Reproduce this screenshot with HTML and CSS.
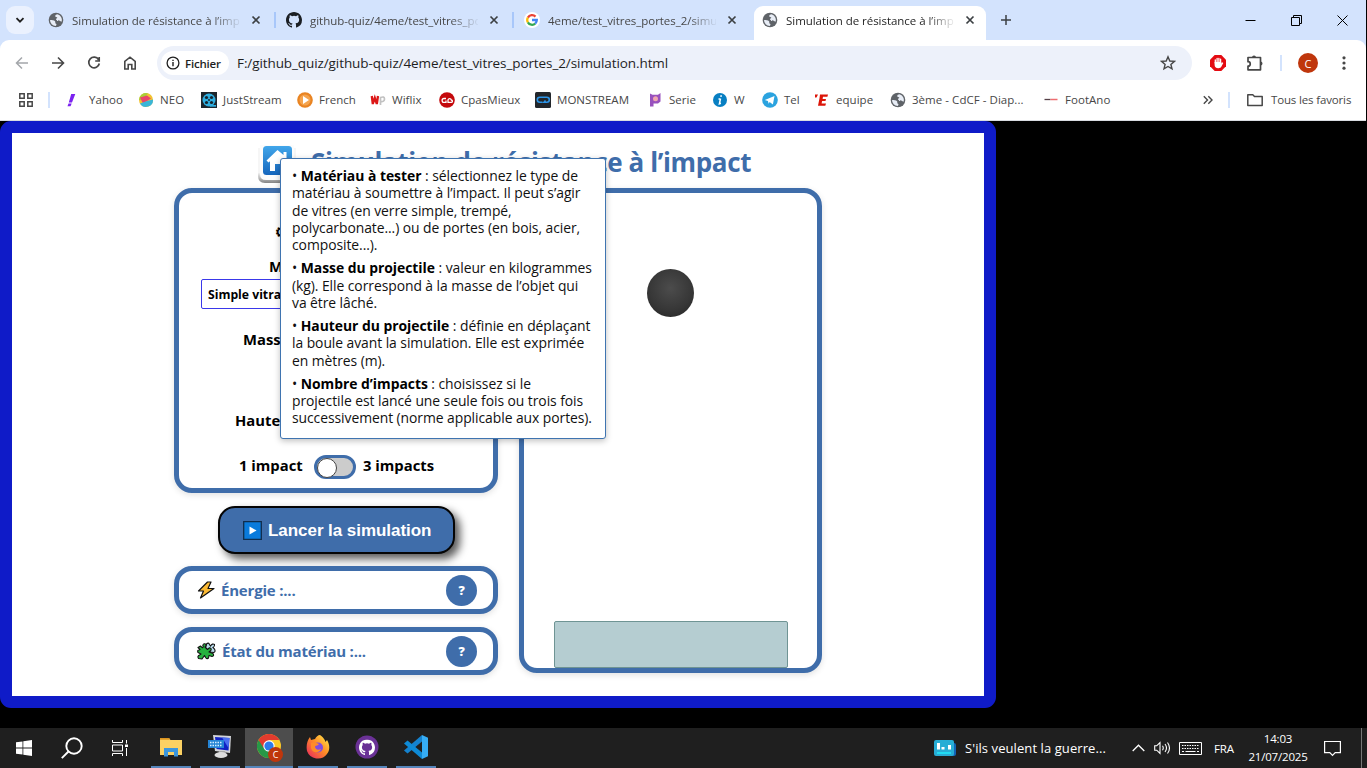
FILE: index.html
```html
<!DOCTYPE html>
<html lang="fr">
<head>
<meta charset="utf-8">
<title>Simulation de résistance à l’impact</title>
<link rel="stylesheet" href="styles.css">
</head>
<body>
<svg class="defs" aria-hidden="true">
  <symbol id="globe" viewBox="0 0 16 16"><circle cx="8" cy="8" r="7.300" fill="#5f6368"/><path d="M2 8c2 0 4 0 5 1.200s-.6 2 1 2.600c1 .4.2 1.800-.2 2.200A6 6 0 0 1 2 8zM9.500 2.300c-1 .2-2.500.7-2.300 1.900.2 1 1.600.6 2 1.400.4.9-1.900 1.100-1 2.200.8 1 2.800.2 3.600 1 .6.6 1 .8 2 .6A6 6 0 0 0 9.500 2.300z" fill="#e8edf6"/></symbol>
  <symbol id="cross" viewBox="0 0 10 10"><path d="M1.500 1.500l7 7M8.500 1.500l-7 7" stroke="#3c4043" stroke-width="1.700"/></symbol>
  <symbol id="cat" viewBox="0 0 16 16"><path fill="currentColor" d="M8 0C3.580 0 0 3.580 0 8c0 3.540 2.290 6.530 5.470 7.590.4.07.55-.17.55-.38v-1.490c-2.220.48-2.690-.95-2.690-.95-.36-.92-.89-1.170-.89-1.170-.73-.5.05-.49.05-.49.81.06 1.230.83 1.230.83.72 1.230 1.880.87 2.340.67.07-.52.28-.87.51-1.070-1.780-.2-3.640-.89-3.640-3.950 0-.87.31-1.590.82-2.150-.08-.2-.36-1.020.08-2.120 0 0 .67-.21 2.200.82a7.600 7.600 0 0 1 4 0c1.530-1.040 2.200-.82 2.200-.82.44 1.100.16 1.920.08 2.120.51.56.82 1.270.82 2.150 0 3.070-1.870 3.750-3.650 3.950.29.25.54.73.54 1.480v2.200c0 .21.150.46.55.38A8 8 0 0 0 16 8c0-4.420-3.580-8-8-8z"/></symbol>
</svg>

<header class="browser">
  <div class="tabstrip">
    <button class="tabsearch"><svg width="10" height="10" viewBox="0 0 10 10"><path d="M1.500 3.200L5 6.700l3.500-3.500" fill="none" stroke="#1f1f1f" stroke-width="1.800"/></svg></button>
    <div class="tab"><svg class="fav"><use href="#globe"/></svg><span class="tabtitle">Simulation de résistance à l’imp</span><svg class="x"><use href="#cross"/></svg></div>
    <div class="tab"><svg class="fav black"><use href="#cat"/></svg><span class="tabtitle">github-quiz/4eme/test_vitres_po</span><svg class="x"><use href="#cross"/></svg></div>
    <div class="tab nosep"><span class="fav gwrap"><svg width="12" height="12" viewBox="0 0 12 12" fill="none" stroke-width="2.300"><path d="M9.500 2.600A4.800 4.800 0 0 0 1.900 3.600" stroke="#ea4335"/><path d="M1.900 3.600a4.800 4.800 0 0 0 0 4.800" stroke="#fbbc05"/><path d="M1.900 8.400a4.800 4.800 0 0 0 7.300 1.200" stroke="#34a853"/><path d="M9.200 9.600A4.800 4.800 0 0 0 10.800 6H6" stroke="#4285f4"/></svg></span><span class="tabtitle">4eme/test_vitres_portes_2/simu</span><svg class="x"><use href="#cross"/></svg></div>
    <div class="tab active"><svg class="fav"><use href="#globe"/></svg><span class="tabtitle">Simulation de résistance à l’imp</span><svg class="x"><use href="#cross"/></svg></div>
    <button class="newtab"><svg width="12" height="12" viewBox="0 0 12 12"><path d="M6 1v10M1 6h10" stroke="#3c4043" stroke-width="1.500"/></svg></button>
    <div class="winctl">
      <svg width="11" height="11" viewBox="0 0 11 11"><path d="M.5 5.500h10" stroke="#000"/></svg>
      <svg width="11" height="11" viewBox="0 0 11 11"><path d="M.5 2.500h8v8h-8zM2.500 2.500v-2h8v8h-2" fill="none" stroke="#000"/></svg>
      <svg width="11" height="11" viewBox="0 0 11 11"><path d="M.5.5l10 10M10.500.5l-10 10" stroke="#000"/></svg>
    </div>
  </div>

  <div class="toolbar">
    <div class="nav">
      <svg viewBox="0 0 16 16" fill="none" stroke="#a4a7ab" stroke-width="1.500"><path d="M14 8H3M8 2.500L2.500 8 8 13.500"/></svg>
      <svg viewBox="0 0 16 16" fill="none" stroke="#474747" stroke-width="1.600"><path d="M2 8h11M8 2.500L13.500 8 8 13.500"/></svg>
      <svg viewBox="0 0 16 16" fill="none" stroke="#474747" stroke-width="1.700"><path d="M12.600 4.700A5.300 5.300 0 1 0 13.300 8.500M13.200 2v4H9.200"/></svg>
      <svg viewBox="0 0 16 16" fill="none" stroke="#474747" stroke-width="1.600"><path d="M2.800 14V6.500L8 2.200l5.200 4.300V14H9.800V9.500H6.200V14z"/></svg>
    </div>
    <div class="omnibox">
      <span class="chip"><svg width="14" height="14" viewBox="0 0 14 14"><circle cx="7" cy="7" r="5.900" fill="none" stroke="#1f1f1f" stroke-width="1.300"/><path d="M7 6v4.200M7 3.700v1.400" stroke="#1f1f1f" stroke-width="1.400"/></svg>Fichier</span>
      <span class="url">F:/github_quiz/github-quiz/4eme/test_vitres_portes_2/simulation.html</span>
      <svg class="star" width="16" height="16" viewBox="0 0 16 16"><path d="M8 1.800l1.800 4.200 4.600.4-3.500 3 1.100 4.500L8 11.500l-4 2.400 1.100-4.500-3.500-3 4.600-.4z" fill="none" stroke="#474747" stroke-width="1.400"/></svg>
    </div>
    <div class="ext">
      <svg width="18" height="18" viewBox="0 0 18 18"><path d="M5.700 1h6.600L17 5.700v6.600L12.300 17H5.700L1 12.300V5.700z" fill="#e40b12"/><path d="M6.300 9V5.800M8.100 9V4.300M9.900 9V4.300M11.600 9V5.200" stroke="#fff" stroke-width="1.300" stroke-linecap="round"/><path d="M5.600 8h6.700v1.500l1.200-1.200.8.600-2 3.900c-.6 1-1.400 1.400-3 1.400-2.500 0-3.700-1.400-3.700-3.400z" fill="#fff"/></svg>
      <svg width="18" height="18" viewBox="0 0 18 18"><path d="M2 3.500h12.500v12.300H2v-3.600c3 0 3-4.500 0-4.500z" fill="none" stroke="#474747" stroke-width="1.700" stroke-linejoin="round"/><path d="M6 3.500a2 2 0 0 1 4 0zM14.500 7.500a2 2 0 0 1 0 4z" fill="#474747"/></svg>
      <i class="bar"></i>
      <b class="avatar">C</b>
      <svg width="4" height="16" viewBox="0 0 4 16" fill="#474747"><circle cx="2" cy="2.800" r="1.600"/><circle cx="2" cy="8" r="1.600"/><circle cx="2" cy="13.200" r="1.600"/></svg>
    </div>
  </div>

  <div class="bookmarks">
    <svg class="apps" width="14" height="14" viewBox="0 0 14 14" fill="none" stroke="#474747" stroke-width="1.500"><path d="M.8.8h4.400v4.400H.8zM8.800.8h4.400v4.400H8.800zM.8 8.800h4.400v4.400H.8zM8.800 8.800h4.400v4.400H8.800z"/></svg>
    <i class="bar"></i>
    <div class="marks">
      <span class="yahoo"><svg viewBox="0 0 16 16" fill="#7b22f0"><path d="M6.200 2h4.100L7 10.500H3.800zM3.500 11.500h3.200L5.500 14.200H2.500z"/></svg>Yahoo</span>
      <span><svg viewBox="0 0 16 16"><circle cx="8" cy="8" r="7" fill="#f2c230"/><path d="M1 8a7 7 0 0 1 9-6.700L5 8z" fill="#a8cf38"/><path d="M2 5.500l7-2 4 3-8 5z" fill="#e8456b"/><path d="M2 11.500L9 9l6-1.500A7 7 0 0 1 2 11.500z" fill="#39b6d8"/></svg>NEO</span>
      <span><svg viewBox="0 0 16 16"><path d="M0 0h16v16H0z" fill="#1d252c"/><circle cx="8" cy="8" r="6.500" fill="#2eaee0"/><path d="M9 13h6v1.700H9z" fill="#2eaee0"/><g fill="#16222c"><circle cx="5.500" cy="5.500" r="1.600"/><circle cx="10.500" cy="5.500" r="1.600"/><circle cx="5.500" cy="10.500" r="1.600"/><circle cx="10.500" cy="10.500" r="1.600"/><circle cx="8" cy="8" r="1"/></g></svg>JustStream</span>
      <span><svg viewBox="0 0 16 16"><circle cx="8" cy="8" r="7.800" fill="#e98422"/><circle cx="8" cy="8" r="5.500" fill="#f5a44e"/><path d="M6 4l6 4-6 4z" fill="#fff"/></svg>French</span>
      <span><svg viewBox="0 0 16 16" fill="none"><path d="M1.800 4l1 8 2-6 2 6 1.200-8" stroke="#dc1717" stroke-width="2.300"/><path d="M10.500 13V5.500q4-1.500 4 1.500t-4 2.500" stroke="#c2c2c2" stroke-width="1.700"/></svg>Wiflix</span>
      <span><svg viewBox="0 0 16 16"><circle cx="8" cy="8" r="7.800" fill="#c4090c"/><path d="M7 6.500H5a1.900 1.900 0 0 0 0 3.800h2V8.500M9 10.300V8A1.700 1.700 0 0 1 12.300 8c1.800.5 1.200 2.300 0 2.300z" stroke="#fff" stroke-width="1.300" fill="none"/></svg>CpasMieux</span>
      <span><svg viewBox="0 0 16 16"><rect width="16" height="16" rx="1.500" fill="#22262b"/><path d="M7.500 10.200H4.800a2.200 2.200 0 0 1 0-5h7a2.200 2.200 0 0 1 0 5H9l1.500-1.700" fill="none" stroke="#2d95e8" stroke-width="1.600"/></svg>MONSTREAM</span>
      <span><svg viewBox="0 0 16 16"><path d="M3 1.500l2.500 1.300h5.500L13.500 1v8.500L11 11.500H6.500v3H3z" fill="#9851bd"/><circle cx="8.500" cy="6.800" r="2.500" fill="#efa7b0"/></svg>Serie</span>
      <span><svg viewBox="0 0 16 16"><circle cx="8" cy="8" r="7" fill="#087fc2"/><path d="M9.300 3.300l-.4 1.600M8.500 6.500L7.400 11.800l1.500-.5M6.500 7h2" fill="none" stroke="#fff" stroke-width="1.500"/></svg>W</span>
      <span><svg viewBox="0 0 16 16"><circle cx="8" cy="8" r="7.800" fill="#2ba3df"/><path d="M2.800 8l9.700-4-1.600 8.600L7.600 10l-.9 1.800-.8-2.700z" fill="#fff"/></svg>Tel</span>
      <span><svg viewBox="0 0 16 16"><path d="M1 2.500h3L2.500 5.500H1zM6 2.500h8l-.6 2.300H9L8.600 7H12l-.5 2H8.100l-.5 2.500H12L11.300 13.700H4l1.500-7.500z" fill="#dc1508"/></svg>equipe</span>
      <span><svg viewBox="0 0 16 16"><use href="#globe"/></svg>3ème - CdCF - Diap...</span>
      <span><svg viewBox="0 0 16 16"><path d="M1.500 7.500h6" stroke="#564048" stroke-width="1.300"/><path d="M7.500 7.500h7" stroke="#ee6d70" stroke-width="1.500"/></svg>FootAno</span>
    </div>
    <svg class="more" width="10" height="10" viewBox="0 0 10 10" fill="none" stroke="#474747" stroke-width="1.400"><path d="M.8 1.200L4.500 5 .8 8.800M5.300 1.200L9 5 5.300 8.800"/></svg>
    <i class="bar"></i>
    <span class="all"><svg width="16" height="14" viewBox="0 0 16 14"><path d="M.8 11.700V1.800h5l1.700 1.700h7.700v9H.8z" fill="none" stroke="#474747" stroke-width="1.500" stroke-linejoin="round"/></svg>Tous les favoris</span>
  </div>
</header>

<main class="viewport">
  <section class="frame">
    <div class="heading">
      <svg class="home" width="40" height="40" viewBox="0 0 40 40">
        <defs><linearGradient id="hb" x2="0" y2="1"><stop offset="0" stop-color="#41a6ea"/><stop offset="1" stop-color="#1566bd"/></linearGradient><linearGradient id="hs" x2="0" y2="1"><stop offset=".7" stop-color="#f6f6f6"/><stop offset="1" stop-color="#858585"/></linearGradient></defs>
        <path d="M1 3v28q0 7 7 7h24q7 0 7-7V3z" fill="url(#hs)"/><path d="M3 0h34v29q0 6-6 6H9q-6 0-6-6z" fill="#fcfcfc"/>
        <rect x="6" y="1" width="29" height="29" rx="3.500" fill="url(#hb)"/><path d="M20.500 5L9.500 15.500l2 2 1.500-1.200V26h5v-7h6v7h5v-9.700l1.500 1.200 2-2-3-2.700V7h-3v3z" fill="#fff"/>
      </svg>
      <h1>Simulation de résistance à l’impact</h1>
    </div>
    <div class="columns">
      <div class="left">
        <div class="panel params">
          <p class="ptitle">⚙ Paramètres</p>
          <p class="lmat">Matériau à tester</p>
          <div class="select">Simple vitrage</div>
          <p class="lmass">Masse du projectile</p>
          <p class="lheight">Hauteur du projectile</p>
          <div class="impacts"><span class="one">1 impact</span><span class="toggle"></span><span>3 impacts</span></div>
        </div>
        <button class="launch"><svg width="19" height="19" viewBox="0 0 19 19"><path d="M.7.7h17.600v17.600H.7z" fill="#0a7bdc" stroke="#102d4c" stroke-width="1.300"/><path d="M6.500 5.500l7 4-7 4z" fill="#fff"/></svg>Lancer la simulation</button>
        <div class="panel result"><svg width="18" height="18" viewBox="0 0 18 18"><path d="M10.500 1L1.500 10h5l-3 7L17 7.500h-6l3-6.500z" fill="#fbb933" stroke="#111" stroke-width="1.200" stroke-linejoin="round"/></svg><span>Énergie :...</span><b class="help">?</b></div>
        <div class="panel result"><svg width="19" height="18" viewBox="0 0 19 18"><path d="M8.500 6l1-4q2-2 3 .5l1 1.500q2-3 4-1.500.5 2-1.500 3l1.500 1.500q1.500 3-1 3.500l-3-.5z" fill="#b9dced" stroke="#111" stroke-width="1.100"/><path d="M1 5.500l2.500-1.500 2 1.800q1.200-.8.300-2.300.5-2.500 2.700-1.500 1.200 1.500-.5 3l2.500 2.500 2-1.800q2.500.5 1.300 2.800l-1.800 1.500 4 1.500q1.500 2.500-1 3l-3-1-.5 2.500q-1.500 1.500-3-.5l-1-2-2.500 3.500-3.500-.5q-1.500-2.500 1-3.500l1.500-1-3-1.500q-1-2.500 1-2.500l1-.5z" fill="#27b13f" stroke="#111" stroke-width="1.100" stroke-linejoin="round"/></svg><span>État du matériau :...</span><b class="help">?</b></div>
      </div>
      <div class="panel scene"><div class="ball"></div><div class="glass"></div></div>
    </div>
    <div class="tooltip">
      <p>• <b>Matériau à tester</b> : sélectionnez le type de<br>matériau à soumettre à l’impact. Il peut s’agir<br>de vitres (en verre simple, trempé,<br>polycarbonate...) ou de portes (en bois, acier,<br>composite...).</p>
      <p>• <b>Masse du projectile</b> : valeur en kilogrammes<br>(kg). Elle correspond à la masse de l’objet qui<br>va être lâché.</p>
      <p>• <b>Hauteur du projectile</b> : définie en déplaçant<br>la boule avant la simulation. Elle est exprimée<br>en mètres (m).</p>
      <p>• <b>Nombre d’impacts</b> : choisissez si le<br>projectile est lancé une seule fois ou trois fois<br>successivement (norme applicable aux portes).</p>
    </div>
  </section>
</main>

<footer class="taskbar">
  <div class="apps-row">
    <div class="sys"><svg width="16" height="16" viewBox="0 0 16 16" fill="#fff"><path d="M0 2.300L6.500 1.400v6.200H0zM7.300 1.300L16 0v7.600H7.300zM0 8.400h6.500v6.200L0 13.700zM7.300 8.400H16V16l-8.700-1.300z"/></svg></div>
    <div class="sys"><svg width="22" height="22" viewBox="0 0 22 22" fill="none" stroke="#fff" stroke-width="1.900"><circle cx="13" cy="9" r="7.700"/><path d="M7.500 14.500L.8 21.200"/></svg></div>
    <div class="sys"><svg width="16" height="16" viewBox="0 0 16 16" fill="none" stroke="#fff"><path d="M.5 0v2.500h10V0M.5 5h10v6H.5zM.5 16v-2.500h10V16M14.500 0v3.500M14.500 8v8"/><path d="M13 4.500h3v2.500h-3z" fill="#fff" stroke="none"/></svg></div>
    <div class="app"><svg width="22" height="20" viewBox="0 0 22 20"><path d="M0 1h9l1.500 2H22v15H0z" fill="#fbd163"/><path d="M0 1h9l1 1.700H0z" fill="#db9420"/><path d="M4 11h14v8.500h-4V15H8v4.500H4z" fill="#3b96dd"/></svg></div>
    <div class="app"><svg width="24" height="24" viewBox="0 0 24 24"><path d="M5 0l18 1-1 17-15-2z" fill="#d3d5d9"/><path d="M7 2l14.500 1-1 12.500-12-1.500z" fill="#0f22c4"/><path d="M14 2.500l7.500.5-1 10z" fill="#4b6ff0"/><path d="M0 5h16v8H0z" fill="#2484d5"/><path d="M2 7.500h12M2 10.500h12" stroke="#d7eeff" stroke-width="1.500" stroke-dasharray="1.500 1"/><path d="M11 16h6l1 2h-7z" fill="#aaa"/><ellipse cx="13" cy="20" rx="6.500" ry="3" fill="#dedede"/></svg></div>
    <div class="app current"><svg width="26" height="26" viewBox="0 0 26 26"><circle cx="12" cy="12" r="12" fill="#fbc928"/><path d="M1.600 6A12 12 0 0 0 12 24l5-9-5-3z" fill="#279847"/><path d="M12 6h10.400A12 12 0 0 0 1.600 6l5 8z" fill="#e33b2e"/><circle cx="12" cy="12" r="5.700" fill="#fff"/><circle cx="12" cy="12" r="4.600" fill="#2d7bea"/></svg><b class="cbadge">C</b></div>
    <div class="app"><svg width="24" height="24" viewBox="0 0 24 24"><defs><linearGradient id="ff" x1="1" x2="0" y2="1"><stop offset="0" stop-color="#fff34f"/><stop offset=".45" stop-color="#ff8e26"/><stop offset="1" stop-color="#e81f62"/></linearGradient></defs><path d="M14 0c4 3 5 5 5.500 7l1.500-2c3 5 3 10 0 14A11.500 11.500 0 0 1 1 16C0 11 1 6 4 2l1 3 4-1c1-2 3-4 5-4z" fill="url(#ff)"/><circle cx="12" cy="12.500" r="5" fill="#804ce0"/><path d="M5 8c3-1 6 0 8 1-1 2-3 1-4 2.500 0 3 3 4 6 2.500-2 5-9 4-10-1z" fill="#ff8b28"/></svg></div>
    <div class="app"><svg width="24" height="24" viewBox="0 0 24 24"><circle cx="12" cy="12" r="11.500" fill="#6a3196"/><svg x="4" y="4.500" width="16" height="16" color="#fff"><use href="#cat"/></svg></svg></div>
    <div class="app"><svg width="24" height="24" viewBox="0 0 24 24"><path d="M18 0v6.500L3.500 18.500 0 15.500z" fill="#1482cf"/><path d="M18 24v-6.500L3.500 5.500 0 8.500z" fill="#0e8ad6"/><path d="M18 0l6 2.800v18.400L18 24z" fill="#36adf5"/></svg></div>
  </div>
  <div class="tray">
    <svg width="22" height="17" viewBox="0 0 22 17"><rect x="3" y="3" width="19" height="13" rx="2" fill="#1263b5"/><rect width="20" height="16" rx="2" fill="#28add5"/><path d="M4.500 3v6.500M9 7v2.500M15.500 5v4.500" stroke="#fff" stroke-width="3"/><path d="M3 13h14" stroke="#21e1f5" stroke-width="1.800"/></svg>
    <span class="news">S'ils veulent la guerre...</span>
    <svg width="13" height="8" viewBox="0 0 13 8"><path d="M.7 7L6.500 1.200 12.300 7" fill="none" stroke="#fff" stroke-width="1.300"/></svg>
    <svg width="17" height="14" viewBox="0 0 17 14" fill="none" stroke="#fff" stroke-width="1.100"><path d="M.7 4.800h2L6 1.500v11L2.700 9.200h-2zM8.500 4.700q1.500 2.300 0 4.600M11 3q3 4 0 8M13.500 1.500q4 5.500 0 11"/></svg>
    <svg width="23" height="13" viewBox="0 0 23 13" fill="none" stroke="#fff"><path d="M.5.5h22v12H.5z"/><path d="M3 3.500h17M3 6.500h17" stroke-dasharray="1.500 1"/><path d="M3 9.500h2M6.500 9.500h10M18 9.500h2"/></svg>
    <span class="lang">FRA</span>
    <span class="clock">14:03<br>21/07/2025</span>
    <svg width="17" height="17" viewBox="0 0 17 17"><path d="M.6 1.500h15.800v11.200h-5.200L8.500 15.500l-2.700-2.800H.6z" fill="none" stroke="#fff" stroke-width="1.200"/></svg>
  </div>
</footer>
</body>
</html>
```
FILE: styles.css
```css
* { box-sizing: border-box; }
body {
  margin: 0; width: 1367px; height: 768px; overflow: hidden; background: #000;
  font-family: "Open Sans", "Noto Sans", sans-serif;
  display: flex; flex-direction: column;
}
p, h1 { margin: 0; }
button { border: 0; padding: 0; font: inherit; }
svg { display: block; flex: none; }
.defs { position: absolute; width: 0; height: 0; }

/* Browser chrome */
.browser { width: 1366px; height: 121px; background: #d3e3fd; flex: none; color: #474747; font-size: 11.5px; }
.tabstrip { height: 40px; display: flex; align-items: center; padding-left: 6px; }
.tabsearch { width: 28px; height: 28px; border-radius: 9px; background: #eaf1fe; display: grid; place-items: center; margin-right: 6px; }
.tab { width: 238px; height: 34px; margin-top: 6px; padding: 0 0 6px 8px; display: flex; align-items: center; position: relative; }
.tab::after { content: ""; position: absolute; right: 2px; top: 6px; width: 2px; height: 16px; background: #a8c7fa; }
.tab.nosep::after, .tab.active::after { display: none; }
.fav { width: 16px; height: 16px; margin-right: 8px; }
.fav.black { color: #1b1f24; }
.gwrap { background: #fff; border-radius: 50%; display: grid; place-items: center; flex: none; }
.tabtitle { width: 168px; white-space: nowrap; line-height: 18px; padding-top: 1px; letter-spacing: -.04px; -webkit-mask-image: linear-gradient(90deg, #000 140px, transparent 170px); mask-image: linear-gradient(90deg, #000 140px, transparent 170px); }
.x { width: 10px; height: 10px; margin-left: 11px; }
.tab.active { width: 232px; background: #fff; border-radius: 9px 9px 0 0; color: #1f1f1f; }
.newtab { width: 28px; height: 28px; margin-left: 6px; background: none; display: grid; place-items: center; }
.winctl { margin-left: auto; display: flex; gap: 35px; padding-right: 18px; }
.toolbar { height: 46px; background: #fff; border-radius: 9px 9px 0 0; display: flex; align-items: center; }
.nav { display: flex; gap: 20px; width: 157px; padding-left: 14px; }
.nav svg { width: 16px; height: 16px; }
.omnibox { width: 1035px; height: 34px; background: #edf1fa; border-radius: 17px; display: flex; align-items: center; padding: 0 16px 0 4px; color: #1f1f1f; }
.chip { width: 68px; height: 24px; border-radius: 12px; background: #fff; display: flex; align-items: center; gap: 5px; padding-left: 5px; font-weight: 600; letter-spacing: -.2px; }
.url { margin-left: 8px; font-size: 13.5px; letter-spacing: -.09px; white-space: nowrap; }
.star { margin-left: auto; }
.ext { display: flex; align-items: center; padding-left: 17px; }
.ext svg:nth-child(2) { margin-left: 19px; }
.bar { width: 2px; height: 16px; background: #d3e3fd; flex: none; }
.ext .bar { margin: 0 16px; }
.avatar { width: 20px; height: 20px; border-radius: 50%; background: #bf360c; color: #fff; display: grid; place-items: center; font-size: 11px; font-weight: 400; margin-right: 24px; }
.bookmarks { height: 35px; background: #fff; border-bottom: 1px solid #d9dce1; display: flex; align-items: center; padding: 0 14px 7px 19px; white-space: nowrap; }
.bookmarks > .bar { margin-left: 15px; }
.marks { display: grid; grid-template-columns: 73px 63px 96px 73px 69px 96px 112px 65px 50px 52px 76px 153px 160px; margin-left: 15px; }
.marks span { display: flex; align-items: center; gap: 6px; letter-spacing: .04px; line-height: 18px; }
.marks span.yahoo { gap: 8px; }
.marks svg { width: 16px; height: 16px; }
.all { display: flex; align-items: center; gap: 8px; margin-left: 17px; letter-spacing: -.15px; }

/* Page */
.viewport { height: 607px; flex: none; }
.frame { position: relative; width: 996px; height: 587px; background: #fff; border: 12px solid #0f1bc8; border-radius: 11px; }
.heading { display: flex; height: 55px; padding: 12px 0 0 245px; }
h1 { font-size: 26px; line-height: 35px; font-weight: 700; color: #3f6daa; white-space: nowrap; margin-left: 14px; letter-spacing: -.37px; }
.columns { display: flex; gap: 21px; padding-left: 162px; }
.left { width: 324px; display: flex; flex-direction: column; }
.panel { border: 5px solid #3f6daa; border-radius: 18px; background: #fff; box-shadow: 0 2px 6px rgba(0,0,0,.12); }
.params { height: 305px; padding: 29px 0 0; font-size: 14.800px; font-weight: 700; line-height: 20px; white-space: nowrap; letter-spacing: 0; color: #000; }
.ptitle { padding-left: 96px; font-size: 14px; }
.lmat { padding-left: 90px; margin-top: 14px; }
.select { width: 270px; height: 30px; margin: 3px 0 0 22px; border: 1px solid #3a38ea; border-radius: 2px; padding-left: 6px; line-height: 29px; font-size: 12.200px; letter-spacing: 0; }
.lmass { padding-left: 64px; margin-top: 20px; }
.lheight { padding-left: 56px; margin-top: 61px; }
.impacts { display: flex; padding-left: 60px; margin-top: 25px; align-items: flex-start; }
.impacts .one { width: 75px; }
.toggle { width: 42px; height: 24px; border: 3px solid #3f6daa; border-radius: 12px; background: #ccc; margin: 0 7px 0 0; }
.toggle::before { content: ""; display: block; width: 18px; height: 18px; border: 1px solid #444; border-radius: 50%; background: #fff; }
.launch { width: 237px; height: 48px; margin: 13px 0 12px 44px; border: 2px solid #050505; border-radius: 17px; background: #3f6daa; box-shadow: 5px 5px 8px rgba(0,0,0,.65); color: #fff; font: bold 17px "Liberation Sans", sans-serif; display: flex; align-items: center; gap: 6px; padding: 1px 0 0 23px; letter-spacing: -.05px; white-space: nowrap; flex: none; }
.result { height: 48px; margin-bottom: 13px; display: flex; align-items: center; padding: 0 16px 0 18px; color: #3f6daa; font-size: 15px; font-weight: 700; gap: 6px; letter-spacing: -.2px; }
.help { width: 31px; height: 31px; border-radius: 50%; background: #3f6daa; color: #fff; display: grid; place-items: center; font-size: 12.5px; margin-left: auto; }
.scene { width: 303px; height: 485px; display: flex; flex-direction: column; align-items: center; padding-top: 76px; }
.ball { width: 47px; height: 48px; border-radius: 50%; background: radial-gradient(circle at 50% 40%, #4c4c4c 0, #363636 60%, #222 100%); }
.glass { width: 234px; height: 47px; margin-top: auto; border: 1.500px solid #6f9494; border-radius: 2px; background: #b5cdd1; }
.tooltip { position: absolute; left: 268px; top: 25px; width: 326px; height: 281px; border: 1px solid #3f74b0; border-radius: 3px; background: #fff; box-shadow: 0 2px 6px rgba(0,0,0,.25); padding: 8px 0 0 11px; font-size: 13.900px; line-height: 17.350px; color: #111; letter-spacing: -.06px; white-space: nowrap; }
.tooltip p { margin-bottom: 5.600px; }
.tooltip b { color: #000; letter-spacing: -.02px; }

/* Taskbar */
.taskbar { height: 40px; background: #1f1f1f; display: flex; justify-content: space-between; color: #fff; flex: none; }
.apps-row { display: flex; }
.sys { width: 48px; display: grid; place-items: center; }
.app { width: 40px; margin-left: 9px; border-bottom: 2px solid #5585bb; display: grid; place-items: center; position: relative; }
.sys + .app { margin-left: 7px; }
.app.current { width: 48px; margin: 0 -4px 0 5px; background: #4d4d4d; padding-left: 2px; }
.app.current + .app { margin-left: 9px; }
.cbadge { position: absolute; left: 23px; top: 19px; width: 15px; height: 15px; border-radius: 50%; background: #bf360c; display: grid; place-items: center; font-size: 9px; font-weight: 400; }
.tray { display: flex; align-items: center; font-size: 12px; white-space: nowrap; padding-right: 5px; }
.tray::after { content: ""; width: 1px; height: 40px; background: #777; margin-left: 20px; }
.news { width: 167px; margin-left: 9px; font-size: 13px; letter-spacing: .08px; }
.tray svg:nth-of-type(3) { margin: 0 8px 0 9px; }
.lang { margin-left: 12px; width: 21px; font-size: 11.5px; letter-spacing: -.2px; }
.clock { width: 60px; margin: 0 16px 0 13px; text-align: center; font-size: 11.5px; line-height: 18px; letter-spacing: -.2px; }
```
